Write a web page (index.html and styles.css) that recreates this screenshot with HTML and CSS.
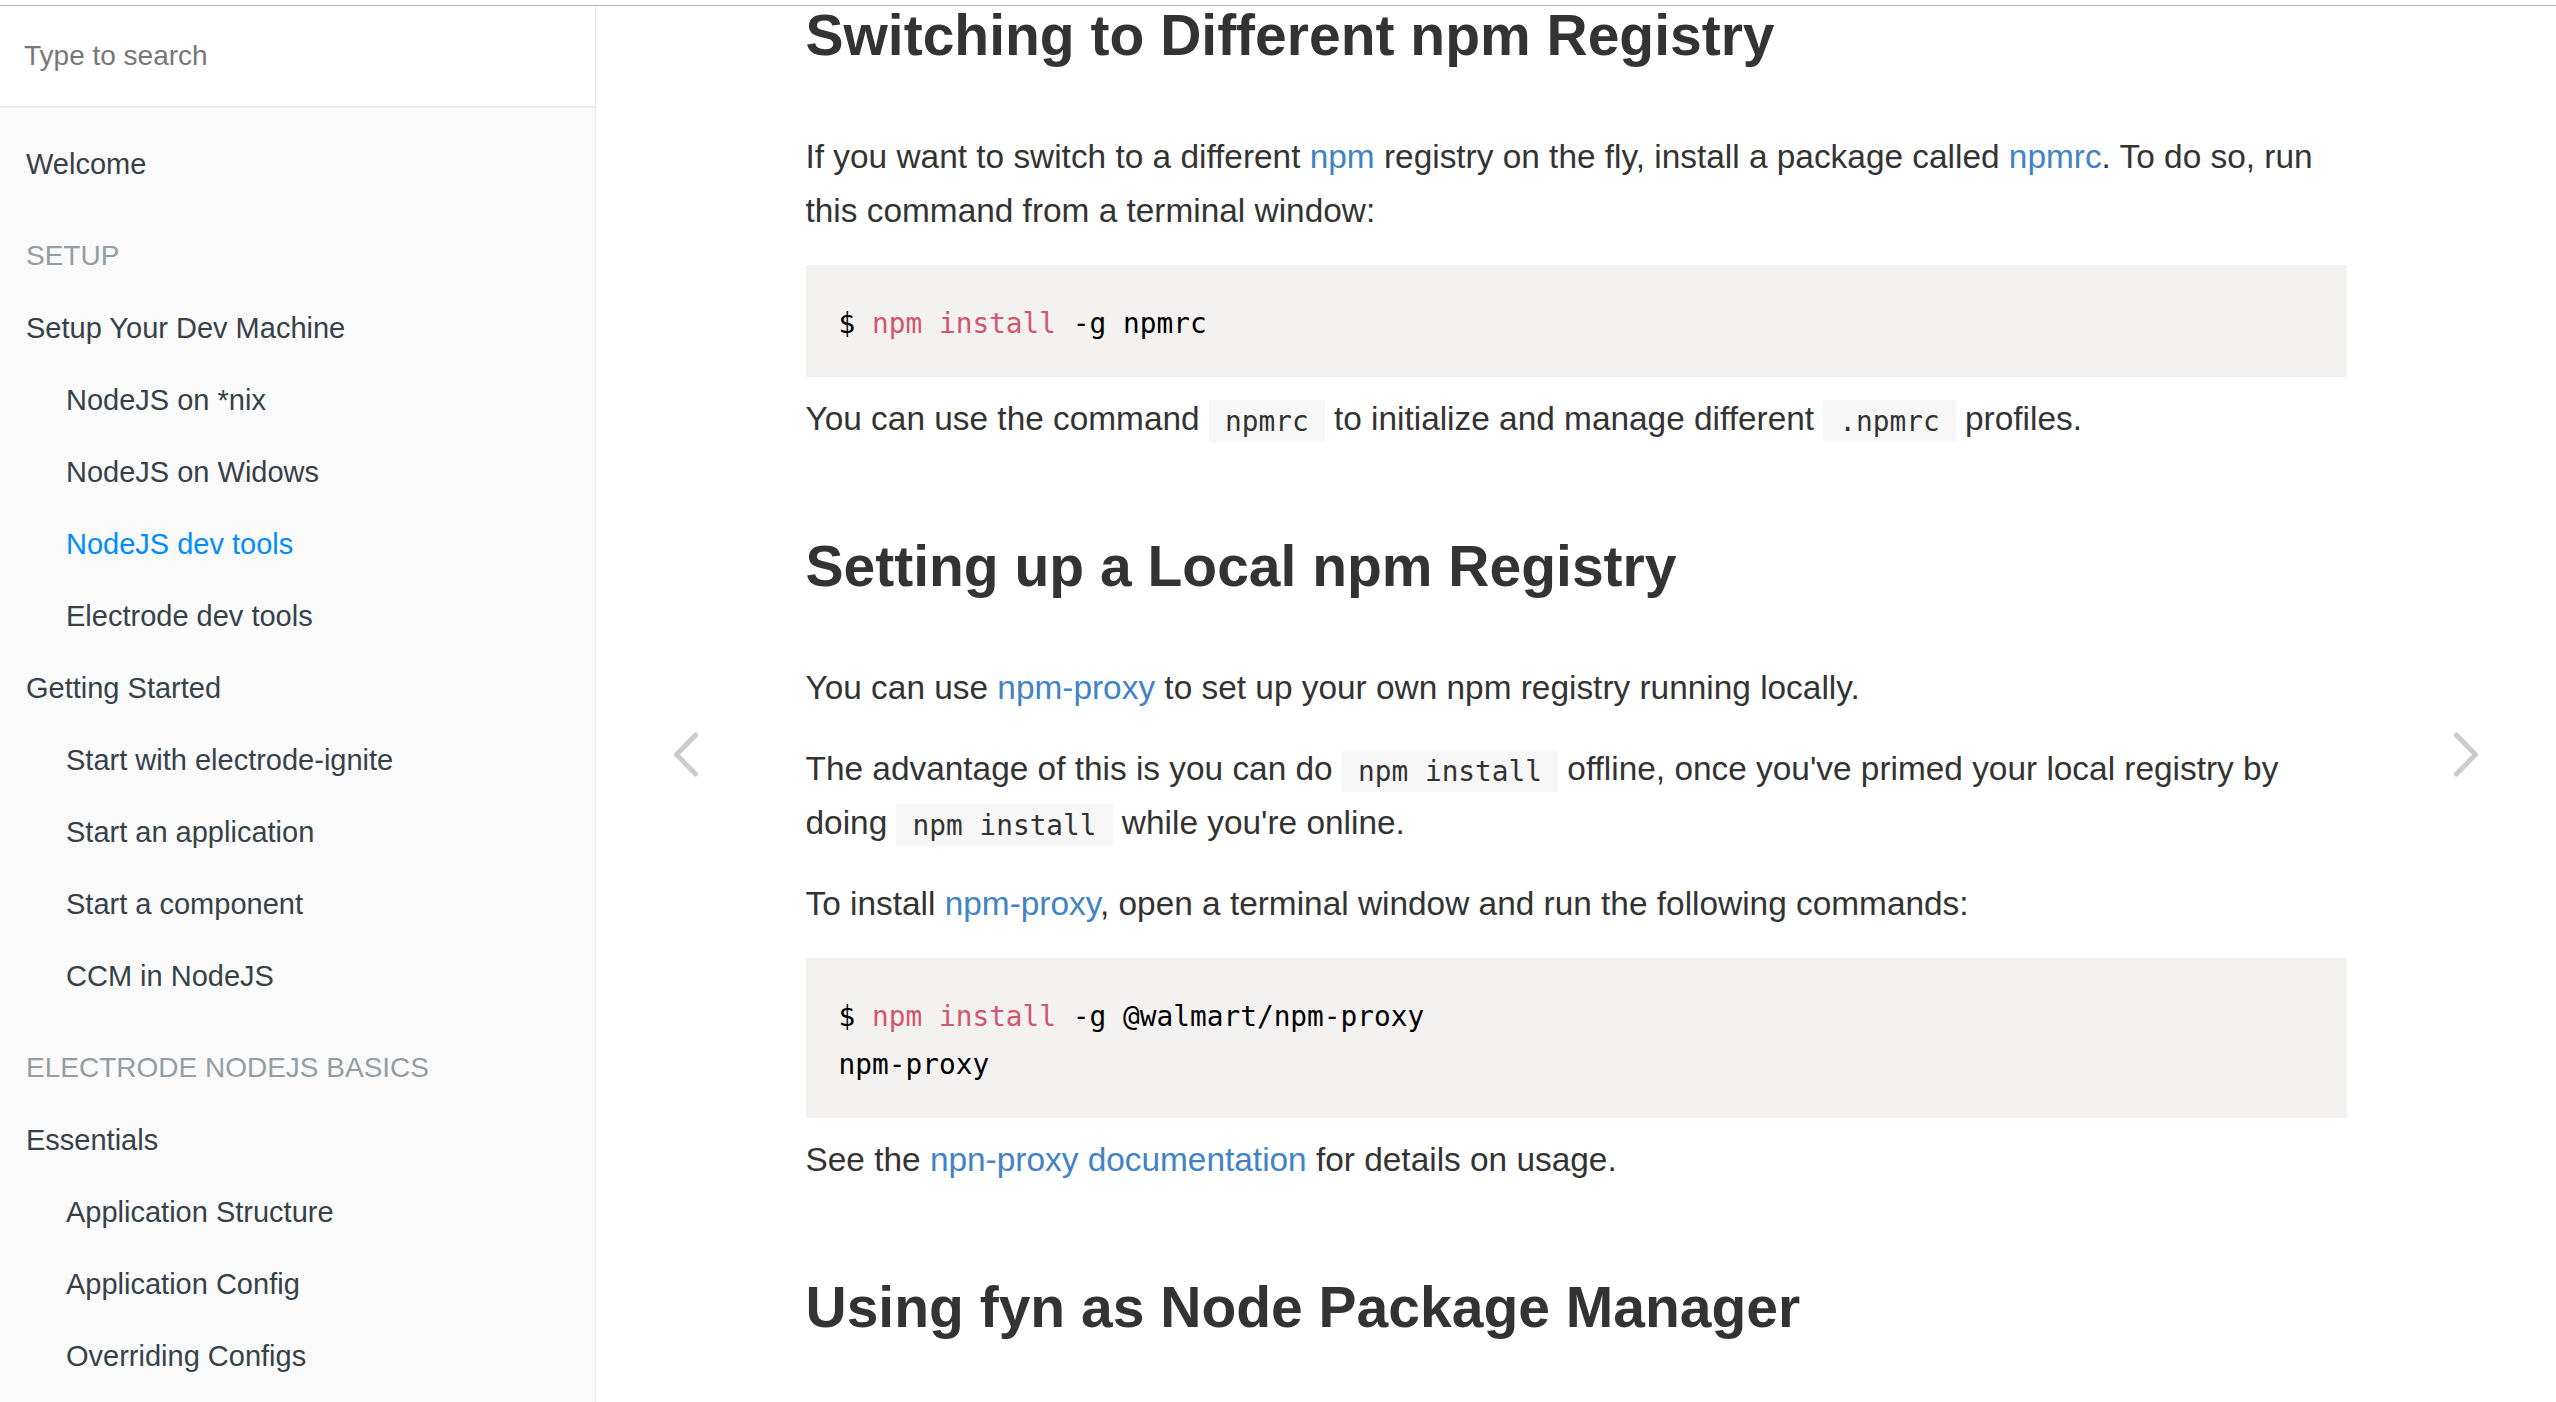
FILE: index.html
```html
<!DOCTYPE html>
<html lang="en">
<head>
<meta charset="utf-8">
<title>Electrode - NodeJS dev tools</title>
<link rel="stylesheet" href="styles.css">
</head>
<body>
<div class="topline"></div>
<div class="book">
  <aside class="sidebar">
    <div class="search">Type to search</div>
    <ul class="summary">
      <li class="item">Welcome</li>
      <li class="divider"></li>
      <li class="header">Setup</li>
      <li class="item">Setup Your Dev Machine</li>
      <li class="item sub">NodeJS on *nix</li>
      <li class="item sub">NodeJS on Widows</li>
      <li class="item sub active">NodeJS dev tools</li>
      <li class="item sub">Electrode dev tools</li>
      <li class="item">Getting Started</li>
      <li class="item sub">Start with electrode-ignite</li>
      <li class="item sub">Start an application</li>
      <li class="item sub">Start a component</li>
      <li class="item sub">CCM in NodeJS</li>
      <li class="divider"></li>
      <li class="header">Electrode NodeJS Basics</li>
      <li class="item">Essentials</li>
      <li class="item sub">Application Structure</li>
      <li class="item sub">Application Config</li>
      <li class="item sub">Overriding Configs</li>
    </ul>
  </aside>
  <main class="body">
    <div class="page-inner">
      <h2>Switching to Different npm Registry</h2>
      <p>If you want to switch to a different <a href="#">npm</a> registry on the fly, install a package called <a href="#">npmrc</a>. To do so, run this command from a terminal window:</p>
      <pre><code>$ <span class="kw">npm install</span> -g npmrc</code></pre>
      <p>You can use the command <code>npmrc</code> to initialize and manage different <code>.npmrc</code> profiles.</p>
      <h2>Setting up a Local npm Registry</h2>
      <p>You can use <a href="#">npm-proxy</a> to set up your own npm registry running locally.</p>
      <p>The advantage of this is you can do <code>npm install</code> offline, once you've primed your local registry by doing <code>npm install</code> while you're online.</p>
      <p>To install <a href="#">npm-proxy</a>, open a terminal window and run the following commands:</p>
      <pre><code>$ <span class="kw">npm install</span> -g @walmart/npm-proxy
npm-proxy</code></pre>
      <p>See the <a href="#">npn-proxy documentation</a> for details on usage.</p>
      <h2>Using fyn as Node Package Manager</h2>
    </div>
    <a class="nav nav-prev" href="#" aria-label="Previous page">
      <svg width="26" height="45" viewBox="0 0 26 45"><polyline points="22.5,3 3.5,22.5 22.5,42" fill="none" stroke="#cccccc" stroke-width="5" stroke-linecap="round" stroke-linejoin="round"/></svg>
    </a>
    <a class="nav nav-next" href="#" aria-label="Next page">
      <svg width="26" height="45" viewBox="0 0 26 45"><polyline points="3.5,3 22.5,22.5 3.5,42" fill="none" stroke="#cccccc" stroke-width="5" stroke-linecap="round" stroke-linejoin="round"/></svg>
    </a>
  </main>
</div>
</body>
</html>
```
FILE: styles.css
```css
html, body {
  margin: 0;
  padding: 0;
  height: 1402px;
  overflow: hidden;
  background: #ffffff;
  font-family: "Liberation Sans", Arial, Helvetica, sans-serif;
}

.topline {
  height: 5px;
  background: #ffffff;
  border-bottom: 1px solid #b4b4b4;
}

.book {
  display: flex;
  height: 1396px;
}

.sidebar {
  width: 595px;
  flex: 0 0 595px;
  background: #fafafa;
  border-right: 1px solid #e8e8e8;
  overflow: hidden;
}

.search {
  height: 100px;
  display: flex;
  align-items: center;
  padding-left: 24px;
  background: #ffffff;
  border-bottom: 2px solid #ebebeb;
  color: #777777;
  font-size: 28px;
}

.summary {
  list-style: none;
  margin: 0;
  padding: 20px 0 0;
}

.summary li {
  font-size: 29px;
  line-height: 32px;
  padding: 20px 26px;
  color: #364149;
  white-space: nowrap;
}

.summary li.sub {
  padding-left: 66px;
}

.summary li.active {
  color: #008cff;
}

.summary li.header {
  font-size: 28px;
  color: #939da3;
  text-transform: uppercase;
}

.summary li.divider {
  height: 20px;
  padding: 0;
}

.body {
  position: relative;
  flex: 1;
  overflow: hidden;
}

.page-inner {
  max-width: 1541px;
  margin: 0 auto;
  color: #333333;
}

h2 {
  font-size: 57px;
  font-weight: 700;
  line-height: 62px;
  margin: 89px 0 64px;
  color: #333333;
  white-space: nowrap;
}

h2:first-child {
  margin-top: -2px;
}

p {
  font-size: 33.4px;
  line-height: 54px;
  margin: 0 0 27px;
}

a {
  color: #4183c4;
  text-decoration: none;
}

code {
  font-family: "DejaVu Sans Mono", "Liberation Mono", monospace;
  font-size: 27.8px;
  line-height: 1;
  background: #f7f7f7;
  padding: 4.5px 16px;
  border-radius: 2px;
  color: #333333;
}

pre {
  margin: 0 0 15px;
  padding: 35px 33px 29px;
  background: #f3f2f1;
  font-family: "DejaVu Sans Mono", "Liberation Mono", monospace;
  font-size: 27.8px;
  line-height: 48px;
  color: #000000;
}

pre code {
  padding: 0;
  background: transparent;
  font-size: inherit;
  line-height: inherit;
  color: inherit;
  border-radius: 0;
}

.kw {
  color: #d1576c;
}

.nav {
  position: absolute;
  top: 100px;
  bottom: 0;
  width: 180px;
  display: flex;
  align-items: center;
  justify-content: center;
}

.nav-prev {
  left: 0;
}

.nav-next {
  right: 0;
}
```
